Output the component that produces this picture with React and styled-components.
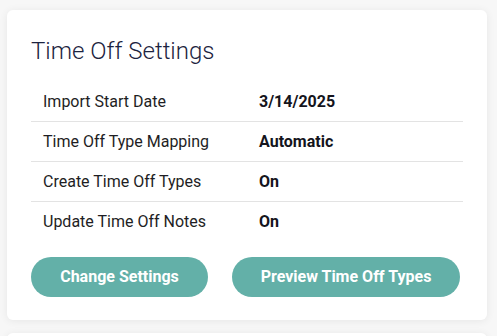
import React from "react";
import styled, { createGlobalStyle } from "styled-components";

const GlobalStyle = createGlobalStyle`
  body {
    margin: 0;
    background: #f7f7f7;
    font-family: Roboto, "Liberation Sans", sans-serif;
  }
`;

const rows = [
  { label: "Import Start Date", value: "3/14/2025" },
  { label: "Time Off Type Mapping", value: "Automatic" },
  { label: "Create Time Off Types", value: "On" },
  { label: "Update Time Off Notes", value: "On" },
];

export default function App() {
  return (
    <>
      <GlobalStyle />
      <Page>
        <Card>
          <Title>Time Off Settings</Title>
          <Table>
            <tbody>
              {rows.map((r) => (
                <Row key={r.label}>
                  <Label>{r.label}</Label>
                  <Value>{r.value}</Value>
                </Row>
              ))}
            </tbody>
          </Table>
          <Actions>
            <PillButton $width={177}>Change Settings</PillButton>
            <PillButton $width={228}>Preview Time Off Types</PillButton>
          </Actions>
        </Card>
        <Card $stub />
      </Page>
    </>
  );
}

const Page = styled.div`
  display: flex;
  flex-direction: column;
  gap: 13px;
  padding: 10px 10px 0 7px;
  height: 336px;
  box-sizing: border-box;
  overflow: hidden;
`;

const Card = styled.div`
  width: 480px;
  flex-shrink: 0;
  box-sizing: border-box;
  background: #fff;
  border-radius: 6px;
  box-shadow: 0 1px 8px rgba(0, 0, 0, 0.07);
  padding: ${(p) => (p.$stub ? "0" : "27px 24px 23px")};
  height: ${(p) => (p.$stub ? "60px" : "auto")};
`;

const Title = styled.h2`
  margin: 0 0 17px;
  font-size: 24px;
  line-height: 28px;
  font-weight: 300;
  color: #1c2340;
`;

const Table = styled.table`
  width: 100%;
  border-collapse: collapse;
  table-layout: fixed;
`;

const Row = styled.tr`
  height: 39.7px;
  border-bottom: 1px solid #e3e3e3;
  &:last-child {
    border-bottom: none;
  }
`;

const Label = styled.td`
  padding: 0 12px;
  font-size: 16px;
  color: #1e1e24;
`;

const Value = styled.td`
  padding: 0 12px;
  font-size: 16px;
  font-weight: 700;
  color: #14141c;
`;

const Actions = styled.div`
  display: flex;
  gap: 24px;
  margin-top: 16px;
`;

const PillButton = styled.button`
  width: ${(p) => p.$width}px;
  height: 40px;
  border: none;
  border-radius: 20px;
  background: #63b0a8;
  color: #fff;
  font-family: Roboto, "Liberation Sans", sans-serif;
  font-size: 16px;
  font-weight: 700;
  cursor: pointer;
`;
